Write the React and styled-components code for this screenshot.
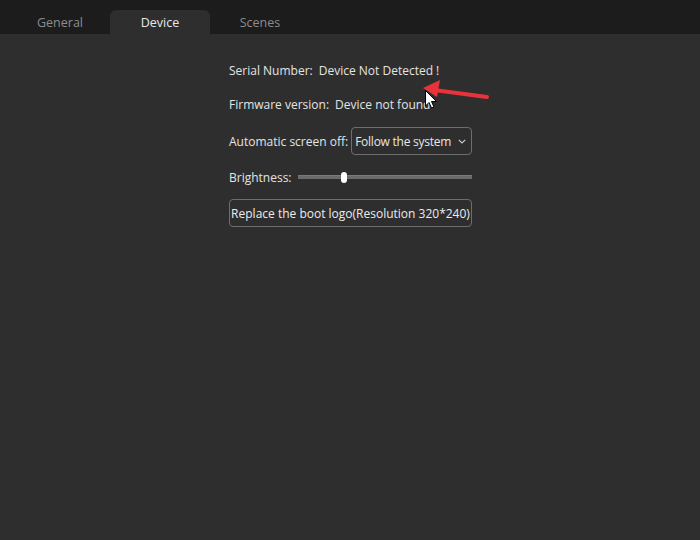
import styled, { createGlobalStyle } from "styled-components";

const Global = createGlobalStyle`
  html, body {
    margin: 0;
    padding: 0;
    background: #2e2e2e;
  }
  body {
    font-family: "Open Sans", "Noto Sans", sans-serif;
    font-size: 12px;
    color: #e6e6e6;
  }
`;

const Window = styled.div`
  position: relative;
  width: 700px;
  height: 540px;
  background: #2e2e2e;
  overflow: hidden;
`;

const TabBar = styled.div`
  display: flex;
  height: 34px;
  padding-left: 10px;
  align-items: flex-end;
  background: #1c1c1c;
`;

const Tab = styled.div`
  width: 100px;
  height: 24px;
  display: flex;
  align-items: center;
  justify-content: center;
  font-size: 12.5px;
  border-radius: 6px 6px 0 0;
  color: ${(p) => (p.$active ? "#e8e8e8" : "#8c8c8c")};
  background: ${(p) => (p.$active ? "#2e2e2e" : "transparent")};
`;

const Content = styled.div`
  display: flex;
  flex-direction: column;
  width: 243px;
  margin-left: 229px;
  padding-top: 24px;
`;

const Row = styled.div`
  display: flex;
  align-items: center;
  height: ${(p) => p.$h || 36}px;
  gap: ${(p) => p.$gap || 0}px;
`;

const Label = styled.span`
  white-space: nowrap;
  color: #e4e4e4;
`;

const Value = styled.span`
  white-space: nowrap;
  color: #e4e4e4;
`;

const Select = styled.div`
  display: flex;
  align-items: center;
  justify-content: space-between;
  flex: 1;
  height: 28px;
  box-sizing: border-box;
  padding: 0 5px 0 3px;
  border: 1px solid #6e6e6e;
  border-radius: 4px;
  white-space: nowrap;
  letter-spacing: -0.25px;
`;

const Slider = styled.div`
  position: relative;
  flex: 1;
  height: 4px;
  background: #6a6a6a;
  border-top: 1px solid #7a7a7a;
  box-sizing: border-box;
`;

const Thumb = styled.div`
  position: absolute;
  top: -4px;
  width: 6px;
  height: 11px;
  border-radius: 3px;
  background: #ffffff;
`;

const Button = styled.div`
  height: 28px;
  box-sizing: border-box;
  display: flex;
  align-items: center;
  justify-content: center;
  border: 1px solid #6e6e6e;
  border-radius: 4px;
  white-space: nowrap;
  color: #ececec;
`;

const Overlay = styled.svg`
  position: absolute;
  left: 0;
  top: 0;
  pointer-events: none;
`;

export default function App() {
  return (
    <Window>
      <Global />
      <TabBar>
        <Tab>General</Tab>
        <Tab $active>Device</Tab>
        <Tab>Scenes</Tab>
      </TabBar>
      <Content>
        <Row $h={24} $gap={6}>
          <Label>Serial Number:</Label>
          <Value>Device Not Detected !</Value>
        </Row>
        <Row $h={45} $gap={6}>
          <Label>Firmware version:</Label>
          <Value>Device not found</Value>
        </Row>
        <Row $h={28} $gap={3}>
          <Label>Automatic screen off:</Label>
          <Select>
            <span>Follow the system</span>
            <svg width="8" height="5" viewBox="0 0 8 5">
              <path d="M0.8 0.8l3.2 3.2L7.2 0.8" stroke="#cfcfcf" strokeWidth="1.1" fill="none" />
            </svg>
          </Select>
        </Row>
        <Row $h={44} $gap={6}>
          <Label>Brightness:</Label>
          <Slider>
            <Thumb style={{ left: `${(43 / 174) * 100}%` }} />
          </Slider>
        </Row>
        <Button>Replace the boot logo(Resolution 320*240)</Button>
      </Content>
      <Overlay width="700" height="540">
        <path d="M487 97 L434 90" stroke="#e8333a" strokeWidth="4" strokeLinecap="round" />
        <path d="M423 88 L440 80 L437 97 Z" fill="#e8333a" />
        <path
          d="M425.5 90.5 L425.5 106 L429 102.5 L431.5 108 L434 107 L431.5 101.5 L436.5 101.5 Z"
          fill="#ffffff"
          stroke="#000000"
          strokeWidth="1"
        />
      </Overlay>
    </Window>
  );
}
